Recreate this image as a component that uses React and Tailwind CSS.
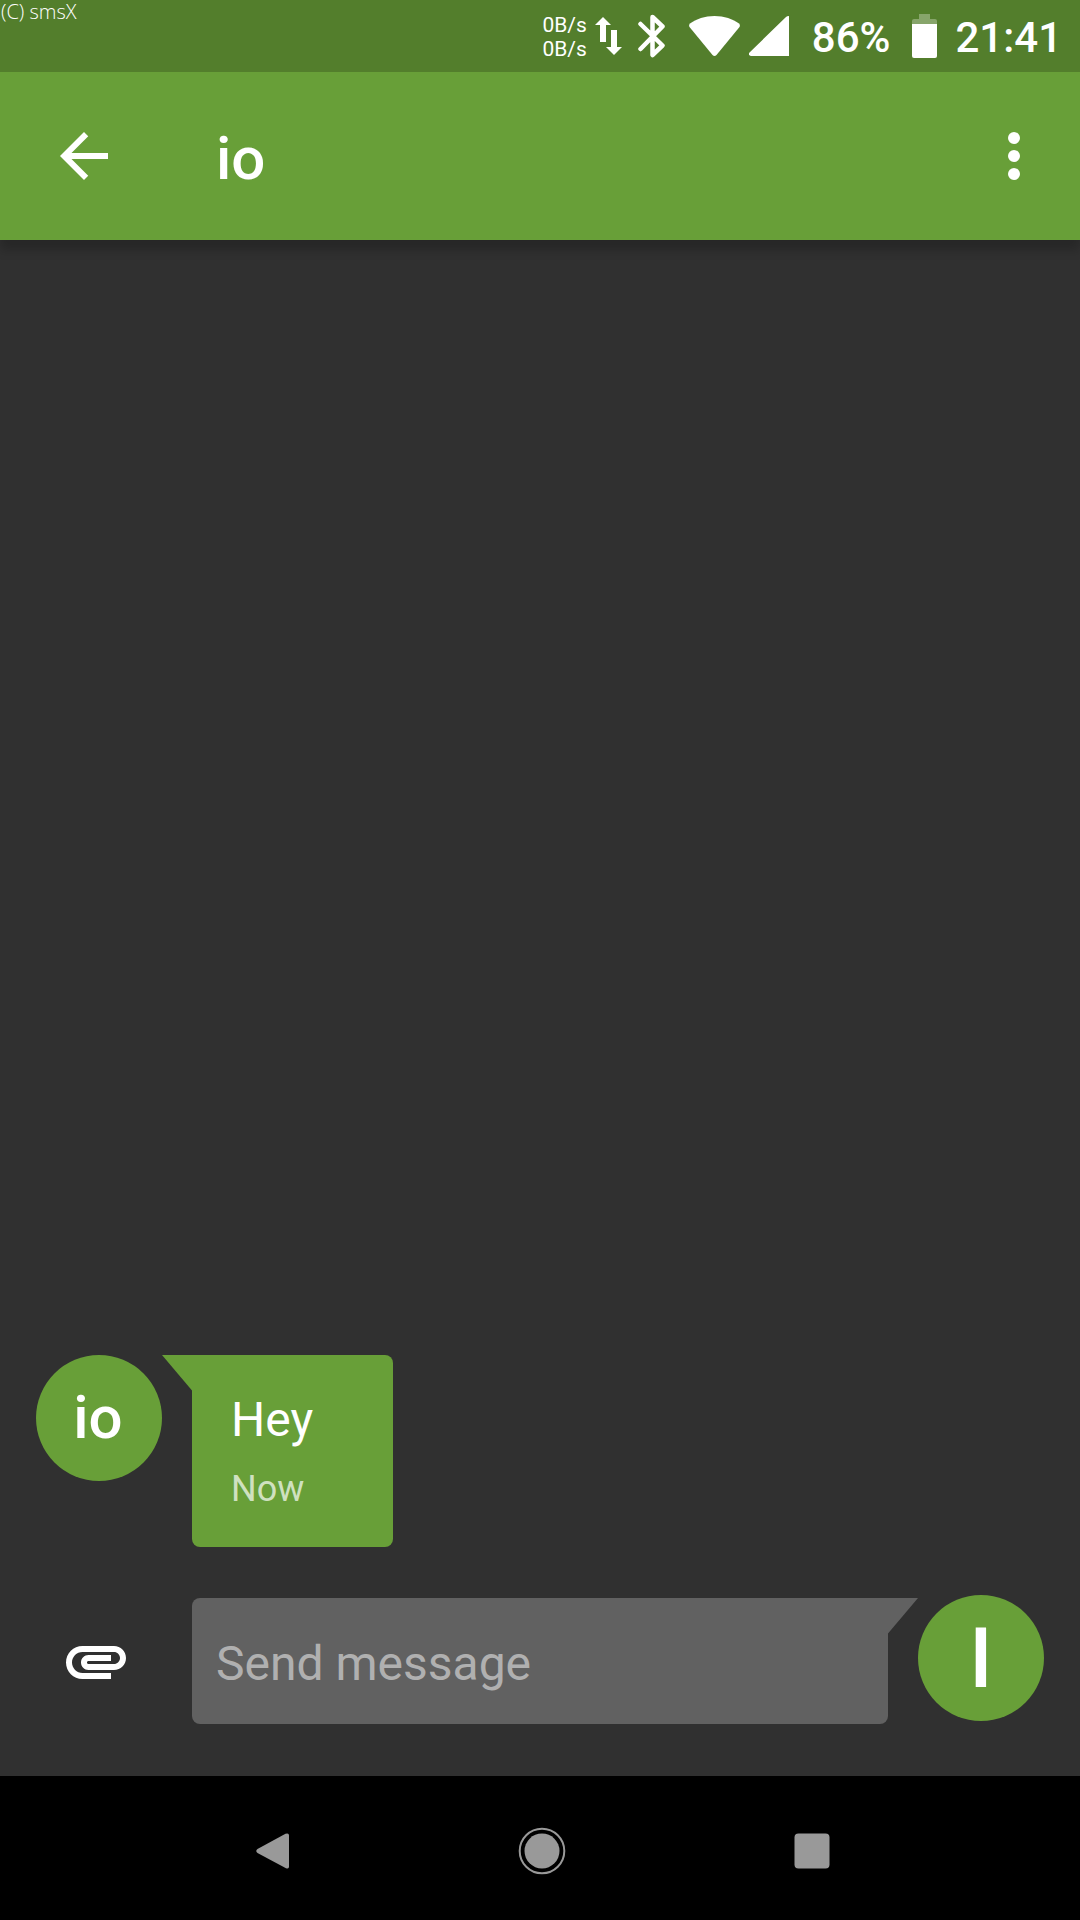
const messages = [{ id: 1, from: "io", text: "Hey", time: "Now" }];

function StatusBar() {
  return (
    <div className="flex h-[72px] items-start justify-between bg-[#537e2c] pr-[18px]">
      <span className="pl-px font-['Open_Sans'] text-[20px] leading-6 font-light">(C) smsX</span>
      <div className="flex h-[72px] items-center">
        <div className="mr-2 pt-0.5 text-[21px] leading-6">
          <div>0B/s</div>
          <div>0B/s</div>
        </div>
        <svg className="mr-4 h-[38px] w-[27px]" viewBox="0 0 27 38" fill="white" aria-hidden="true">
          <path d="M8 0 16 8H11V25H5V8H0ZM16 13H22V30H27L19 38 11 30H16Z" />
        </svg>
        <svg
          className="mr-6 h-[44px] w-[27px]"
          viewBox="0 0 27 44"
          fill="none"
          stroke="white"
          strokeWidth="4.500"
          strokeLinecap="round"
          strokeLinejoin="round"
          aria-hidden="true"
        >
          <path d="M2.500 10 24.500 31.500 14.500 41V3L24.500 12.500 2.500 35" />
        </svg>
        <svg className="mr-[9px] h-[42px] w-[51px]" viewBox="0 0 51 42" fill="white" aria-hidden="true">
          <path d="M1 8.500C7 4 16 1 25.500 1S44 4 50 8.500Q51.500 10 50.500 12L27.500 40Q25.500 42 23.500 40L.5 12Q-.5 10 1 8.500Z" />
        </svg>
        <svg className="mr-[23px] h-[40px] w-[40px]" viewBox="0 0 40 40" fill="white" aria-hidden="true">
          <path d="M40 0V40H2Q-1 39 0 37L37 1Q38 0 40 0Z" />
        </svg>
        <span className="mr-[22px] pt-1 text-[42px] leading-[50px] font-medium">86%</span>
        <svg className="mr-[18px] h-[44px] w-[25px]" viewBox="0 0 25 44" fill="white" aria-hidden="true">
          <path d="M7 0H18V5H23Q25 5 25 7V10H0V7Q0 5 2 5H7Z" fillOpacity=".3" />
          <path d="M0 10H25V42Q25 44 23 44H2Q0 44 0 42Z" />
        </svg>
        <span className="pt-1 text-[42px] leading-[50px] font-medium">21:41</span>
      </div>
    </div>
  );
}

function AppBar() {
  return (
    <header className="z-10 flex h-[168px] items-center bg-[#689f38] pr-[30px] pl-12 shadow-[0_10px_10px_rgba(0,0,0,0.2)]">
      <button type="button" aria-label="Back">
        <svg className="size-[72px]" viewBox="0 0 24 24" fill="white">
          <path d="M20 11H7.830l5.590-5.590L12 4l-8 8 8 8 1.410-1.410L7.830 13H20v-2z" />
        </svg>
      </button>
      <h1 className="ml-24 flex-1 pt-1.5 text-[60px] leading-[72px] font-medium">io</h1>
      <button type="button" aria-label="More options">
        <svg className="size-[72px]" viewBox="0 0 24 24" fill="white">
          <circle cx="12" cy="6" r="2" />
          <circle cx="12" cy="12" r="2" />
          <circle cx="12" cy="18" r="2" />
        </svg>
      </button>
    </header>
  );
}

function Message({ from, text, time }) {
  return (
    <li className="flex items-start">
      <div className="flex size-[126px] items-center justify-center rounded-full bg-[#689f38] pr-0.5 text-[60px] leading-[72px] font-medium">
        {from}
      </div>
      <svg className="h-[36px] w-[30px]" viewBox="0 0 30 36" fill="#689f38" aria-hidden="true">
        <path d="M0 0H30V35.500Z" />
      </svg>
      <div className="min-w-[201px] rounded-lg rounded-tl-none bg-[#689f38] px-[39px] pt-[37px] pb-[37px]">
        <p className="text-[48px] leading-[56px]">{text}</p>
        <p className="mt-5 text-[36px] leading-[42px] text-white/70">{time}</p>
      </div>
    </li>
  );
}

function Composer() {
  return (
    <form className="flex items-start pt-12 pb-[52px]" onSubmit={(e) => e.preventDefault()}>
      <button type="button" aria-label="Attach" className="mt-[30px] mr-[60px] ml-6">
        <svg className="size-[72px]" viewBox="0 0 24 24" fill="white">
          <path d="M2 12.500C2 9.460 4.460 7 7.500 7H18c2.210 0 4 1.790 4 4s-1.790 4-4 4H9.500C8.120 15 7 13.880 7 12.500S8.120 10 9.500 10H17v2H9.410c-.55 0-.55 1 0 1H18c1.100 0 2-.9 2-2s-.9-2-2-2H7.500C5.570 9 4 10.570 4 12.500S5.570 16 7.500 16H17v2H7.500C4.460 18 2 15.540 2 12.500z" />
        </svg>
      </button>
      <input
        type="text"
        aria-label="Send message"
        placeholder="Send message"
        className="mt-[3px] h-[126px] min-w-0 flex-1 rounded-lg rounded-tr-none bg-[#616161] px-6 pt-1 text-[48px] leading-[56px] text-white outline-none placeholder:text-[#b0b0b0]"
      />
      <svg className="mt-[3px] h-[36px] w-[30px]" viewBox="0 0 30 36" fill="#616161" aria-hidden="true">
        <path d="M0 0H30L0 35.500Z" />
      </svg>
      <button
        type="submit"
        aria-label="Send"
        className="flex size-[126px] items-center justify-center rounded-full bg-[#689f38] pt-0.5 text-[84px] leading-[98px] font-medium"
      >
        I
      </button>
    </form>
  );
}

function NavigationBar() {
  return (
    <nav className="flex h-[144px] items-center justify-center bg-black pt-1.5 pl-1" aria-label="System">
      <button type="button" aria-label="Back" className="flex w-[270px] justify-center">
        <svg className="size-[48px]" viewBox="0 0 48 48" fill="#999">
          <path d="M37.500 6.800Q41 5.500 41 8.500V39.500Q41 42.500 38 41.200L9.500 26Q7 24 9.500 22Z" />
        </svg>
      </button>
      <button type="button" aria-label="Home" className="flex w-[270px] justify-center">
        <svg className="size-[48px]" viewBox="0 0 48 48">
          <circle cx="24" cy="24" r="22.300" fill="none" stroke="#999" strokeWidth="2" />
          <circle cx="24" cy="24" r="17.500" fill="#999" />
        </svg>
      </button>
      <button type="button" aria-label="Recent apps" className="flex w-[270px] justify-center">
        <svg className="size-[48px]" viewBox="0 0 48 48">
          <rect x="6.500" y="6.500" width="35" height="35" rx="4" fill="#999" />
        </svg>
      </button>
    </nav>
  );
}

export default function App() {
  return (
    <div className="flex min-h-screen flex-col bg-[#303030] font-[Roboto,sans-serif] text-white">
      <StatusBar />
      <AppBar />
      <main className="flex flex-1 flex-col justify-end px-9">
        <ul className="flex flex-col gap-6">
          {messages.map((m) => (
            <Message key={m.id} from={m.from} text={m.text} time={m.time} />
          ))}
        </ul>
        <Composer />
      </main>
      <NavigationBar />
    </div>
  );
}
